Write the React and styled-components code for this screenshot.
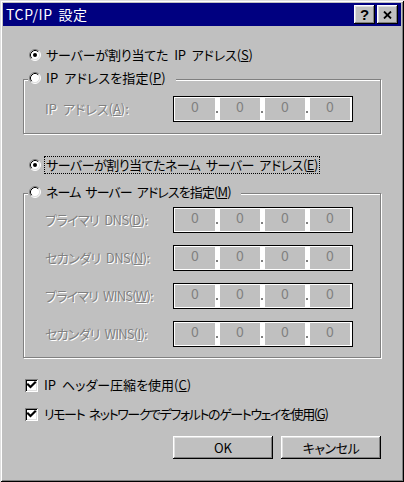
import React from "react";
import styled, { createGlobalStyle } from "styled-components";

const Global = createGlobalStyle`
  html, body { margin: 0; padding: 0; background: #c0c0c0; }
  body { font-family: "Noto Sans CJK JP", "Noto Sans", sans-serif; }
`;

const FONT = `"Noto Sans CJK JP", "Noto Sans", sans-serif`;

const Window = styled.div`
  box-sizing: border-box;
  width: 404px;
  height: 482px;
  padding: 3px;
  background: #c0c0c0;
  box-shadow: inset 1px 1px 0 #dfdfdf, inset -1px -1px 0 #000,
    inset 2px 2px 0 #fff, inset -2px -2px 0 #808080;
  display: flex;
  flex-direction: column;
  font-family: ${FONT};
  font-size: 13px;
  font-feature-settings: "palt";
  color: #000;
`;

const TitleBar = styled.div`
  height: 23px;
  background: #000080;
  color: #fff;
  display: flex;
  align-items: center;
  padding: 0 3px;
`;

const Title = styled.div`
  flex: 1;
  font-size: 14px;
  letter-spacing: 0.6px;
  word-spacing: 2px;
  line-height: 23px;
`;

const TitleButtons = styled.div`
  display: flex;
  gap: 2px;
`;

const TitleButton = styled.div`
  box-sizing: border-box;
  width: 21px;
  height: 19px;
  background: #c0c0c0;
  box-shadow: inset -1px -1px 0 #000, inset 1px 1px 0 #fff,
    inset -2px -2px 0 #808080, inset 2px 2px 0 #dfdfdf;
  display: flex;
  align-items: center;
  justify-content: center;
  color: #000;
  font-family: "Liberation Sans", sans-serif;
  font-weight: bold;
  font-size: 15px;
  line-height: 1;
`;

const Body = styled.div`
  padding: 21px 20px 0 20px;
  display: flex;
  flex-direction: column;
`;

const OptionRow = styled.label`
  display: flex;
  align-items: center;
  gap: ${(p) => p.$gap ?? 5}px;
  height: 16px;
  margin-left: ${(p) => p.$indent ?? 6}px;
  margin-top: ${(p) => p.$top ?? 0}px;
  white-space: nowrap;
`;

const Text = styled.span`
  letter-spacing: ${(p) => p.$ls ?? 0}px;
  word-spacing: 3px;
  line-height: 16px;
  white-space: nowrap;
`;

const FocusText = styled(Text)`
  outline: 1px dotted #000;
  outline-offset: 0;
  padding: 0 1px;
`;

const Group = styled.fieldset`
  margin: ${(p) => p.$top}px 0 0 0;
  padding: 0;
  border: 1px solid #808080;
  box-shadow: 1px 1px 0 #fff, inset 1px 1px 0 #fff;
  min-width: 0;
`;

const Legend = styled.legend`
  margin-left: 4px;
  padding: 0 10px 0 1px;
  height: 18px;
  background: #c0c0c0;
  display: flex;
  align-items: flex-start;
`;

const GroupContent = styled.div`
  display: flex;
  flex-direction: column;
  gap: 12px;
  padding: ${(p) => p.$pt}px 0 ${(p) => p.$pb}px 21px;
`;

const FieldRow = styled.div`
  display: grid;
  grid-template-columns: 128px 180px;
  align-items: center;
`;

const Disabled = styled(Text)`
  color: #808080;
  text-shadow: 1px 1px 0 #fff;
`;

const IpBox = styled.div`
  box-sizing: border-box;
  width: 180px;
  height: 26px;
  border: 1px solid #000;
  background: #fff;
  padding: 1px;
  display: flex;
`;

const Octet = styled.div`
  width: 40px;
  height: 22px;
  background: #c0c0c0;
  color: #808080;
  text-align: center;
  font-size: 14px;
  line-height: 17px;
  font-feature-settings: normal;
`;

const Sep = styled.div`
  width: 5px;
  height: 22px;
  display: flex;
  flex-direction: column;
  align-items: flex-start;
  &::after {
    content: "";
    width: 2px;
    height: 2px;
    background: #808080;
    margin: 13px 0 0 1px;
  }
`;

const Buttons = styled.div`
  display: flex;
  justify-content: flex-end;
  gap: 8px;
  margin-top: 14px;
`;

const Button = styled.button`
  box-sizing: border-box;
  width: 100px;
  height: 23px;
  padding: 0;
  border: none;
  background: #c0c0c0;
  box-shadow: inset -1px -1px 0 #000, inset 1px 1px 0 #fff,
    inset -2px -2px 0 #808080, inset 2px 2px 0 #dfdfdf;
  font-family: ${FONT};
  font-size: 13px;
  font-feature-settings: "palt";
  letter-spacing: ${(p) => p.$ls ?? 0}px;
  color: #000;
`;

const CheckBoxBox = styled.span`
  box-sizing: border-box;
  width: 13px;
  height: 13px;
  background: #fff;
  box-shadow: inset 1px 1px 0 #808080, inset -1px -1px 0 #fff,
    inset 2px 2px 0 #000, inset -2px -2px 0 #dfdfdf;
  display: flex;
  flex: none;
`;

const Radio = ({ checked }) => (
  <svg width="12" height="12" viewBox="0 0 12 12" style={{ flex: "none" }}>
    <circle cx="6" cy="6" r="5" fill="#fff" />
    <path d="M2.11 9.89 A5.5 5.5 0 0 1 9.89 2.11" stroke="#808080" fill="none" />
    <path d="M9.89 2.11 A5.5 5.5 0 0 1 2.11 9.89" stroke="#fff" fill="none" />
    <path d="M2.82 9.18 A4.5 4.5 0 0 1 9.18 2.82" stroke="#000" fill="none" />
    <path d="M9.18 2.82 A4.5 4.5 0 0 1 2.82 9.18" stroke="#dfdfdf" fill="none" />
    {checked && <circle cx="6" cy="6" r="2" fill="#000" />}
  </svg>
);

const CheckBox = () => (
  <CheckBoxBox>
    <svg width="13" height="13" viewBox="0 0 13 13">
      <path d="M3 5.5 L5.5 8 L10 3.5" stroke="#000" strokeWidth="2.2" fill="none" strokeLinecap="square" />
    </svg>
  </CheckBoxBox>
);

const IpField = () => (
  <IpBox>
    <Octet>0</Octet>
    <Sep />
    <Octet>0</Octet>
    <Sep />
    <Octet>0</Octet>
    <Sep />
    <Octet>0</Octet>
  </IpBox>
);

const Field = ({ label, ls }) => (
  <FieldRow>
    <Disabled $ls={ls}>{label}</Disabled>
    <IpField />
  </FieldRow>
);

export default function App() {
  return (
    <>
      <Global />
      <Window>
        <TitleBar>
          <Title>TCP/IP 設定</Title>
          <TitleButtons>
            <TitleButton>?</TitleButton>
            <TitleButton>
              <svg width="9" height="8" viewBox="0 0 9 8">
                <path d="M1 0.5 L8 7.5 M8 0.5 L1 7.5" stroke="#000" strokeWidth="1.8" />
              </svg>
            </TitleButton>
          </TitleButtons>
        </TitleBar>
        <Body>
          <OptionRow>
            <Radio checked />
            <Text $ls={-0.15}>
              サーバーが割り当てた IP アドレス(<u>S</u>)
            </Text>
          </OptionRow>

          <Group $top={7}>
            <Legend>
              <OptionRow $indent={0}>
                <Radio />
                <Text $ls={0.1}>
                  IP アドレスを指定(<u>P</u>)
                </Text>
              </OptionRow>
            </Legend>
            <GroupContent $pt={8} $pb={11}>
              <Field
                label={
                  <>
                    IP アドレス(<u>A</u>):
                  </>
                }
              />
            </GroupContent>
          </Group>

          <OptionRow $top={23} $gap={4}>
            <Radio checked />
            <FocusText $ls={-0.5}>
              サーバーが割り当てたネーム サーバー アドレス(<u>E</u>)
            </FocusText>
          </OptionRow>

          <Group $top={11}>
            <Legend>
              <OptionRow $indent={0}>
                <Radio />
                <Text $ls={-0.9}>
                  ネーム サーバー アドレスを指定(<u>M</u>)
                </Text>
              </OptionRow>
            </Legend>
            <GroupContent $pt={5} $pb={10}>
              <Field ls={-0.6} label={<>プライマリ DNS(<u>D</u>):</>} />
              <Field ls={-0.6} label={<>セカンダリ DNS(<u>N</u>):</>} />
              <Field ls={-0.8} label={<>プライマリ WINS(<u>W</u>):</>} />
              <Field ls={-0.8} label={<>セカンダリ WINS(<u>I</u>):</>} />
            </GroupContent>
          </Group>

          <OptionRow $top={19} $indent={2} $gap={6}>
            <CheckBox />
            <Text>
              IP ヘッダー圧縮を使用(<u>C</u>)
            </Text>
          </OptionRow>
          <OptionRow $top={13} $indent={2} $gap={6}>
            <CheckBox />
            <Text $ls={-1.4}>
              リモート ネットワークでデフォルトのゲートウェイを使用(<u>G</u>)
            </Text>
          </OptionRow>

          <Buttons>
            <Button>OK</Button>
            <Button $ls={-0.5}>キャンセル</Button>
          </Buttons>
        </Body>
      </Window>
    </>
  );
}
